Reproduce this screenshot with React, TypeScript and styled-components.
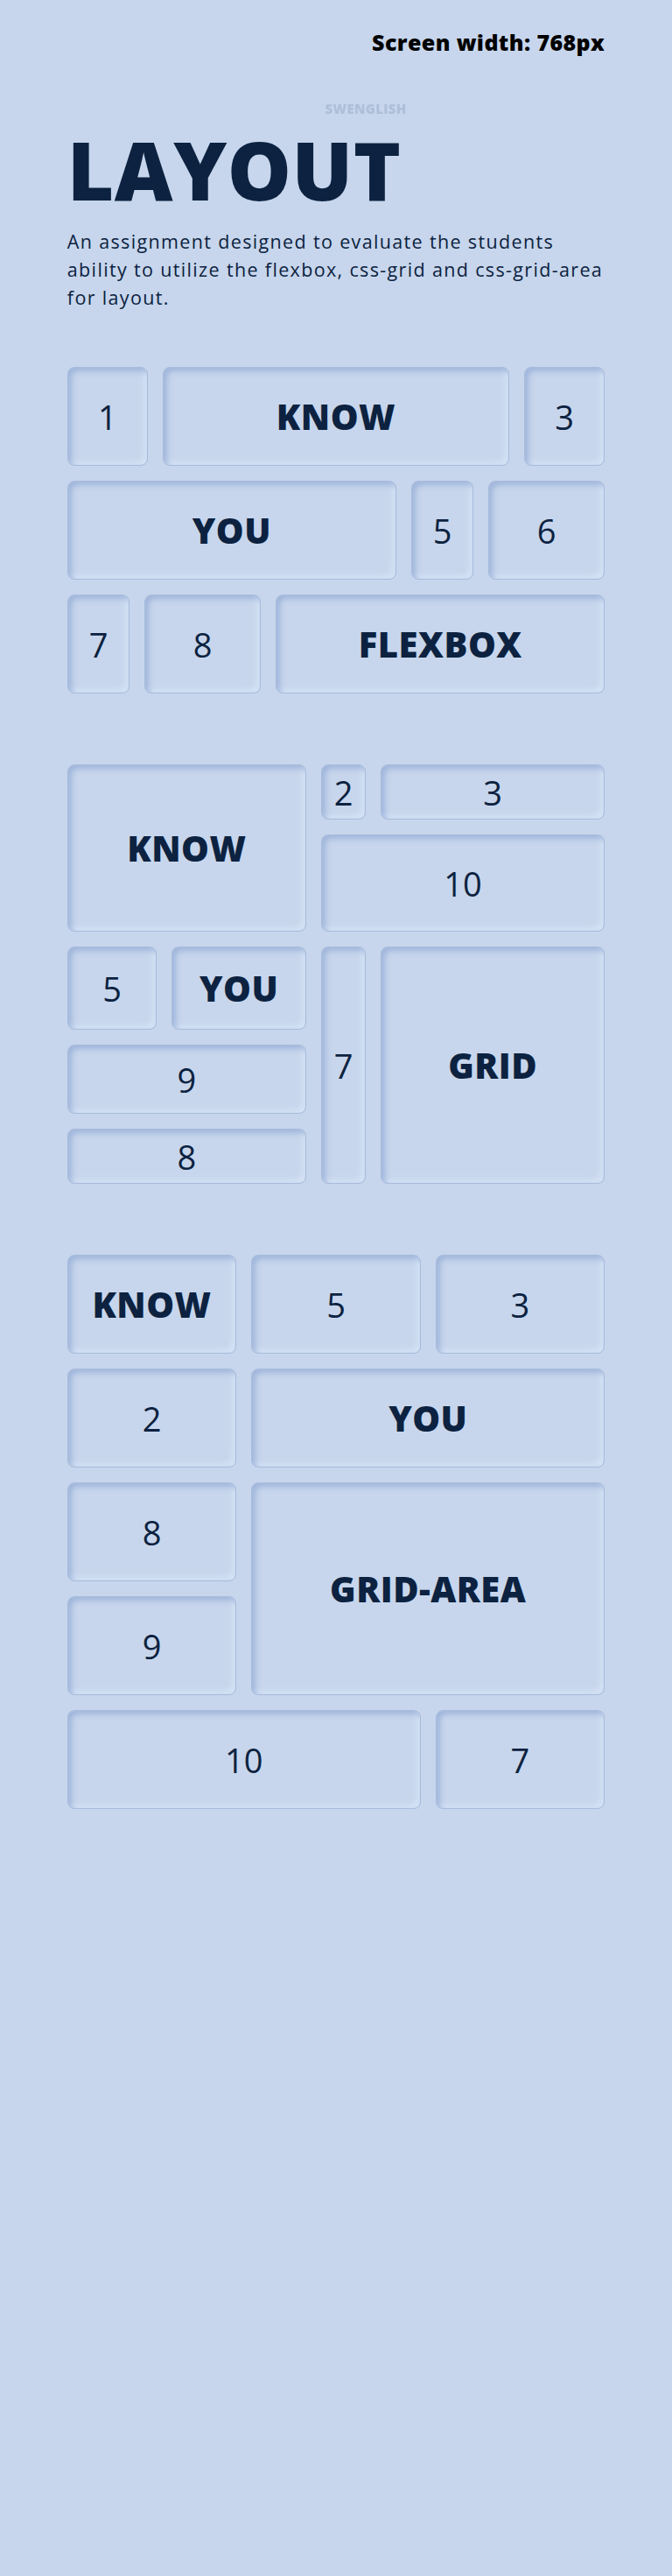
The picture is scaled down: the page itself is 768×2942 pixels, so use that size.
import styled, { createGlobalStyle, css } from 'styled-components'

const INK = '#0c2240'
const BG = '#c7d6ec'

const GlobalStyle = createGlobalStyle`
  html, body {
    margin: 0;
    padding: 0;
    background: ${BG};
  }
  body {
    font-family: 'Open Sans', 'Liberation Sans', sans-serif;
    color: ${INK};
    min-height: 2942px;
  }
  * {
    box-sizing: border-box;
  }
`

const Page = styled.main`
  display: flex;
  flex-direction: column;
  padding: 0 10% 80px;
`

const ScreenWidth = styled.div`
  padding-top: 30px;
  text-align: right;
  font-size: 25px;
  font-weight: 800;
  line-height: 36px;
  color: #000;
  letter-spacing: 0.4px;
`

const Watermark = styled.div`
  margin-top: 48px;
  margin-left: 68px;
  text-align: center;
  font-size: 15px;
  font-weight: 800;
  line-height: 20px;
  letter-spacing: 0.3px;
  color: #aebfd9;
  filter: blur(0.6px);
`

const Title = styled.h1`
  margin: 10px 0 0;
  font-size: 92px;
  font-weight: 800;
  line-height: 100px;
  letter-spacing: 0.5px;
`

const Lead = styled.p`
  margin: 16px 0 0;
  font-size: 21.5px;
  font-weight: 400;
  line-height: 32px;
  letter-spacing: 1.35px;
`

const Section = styled.section`
  margin-top: 81px;
  &:first-of-type {
    margin-top: 63px;
  }
`

const FlexStack = styled.div`
  display: flex;
  flex-direction: column;
  gap: 17px;
`

const FlexRow = styled.div`
  display: flex;
  gap: 17px;
  height: 113px;
`

const Box = styled.div<{ $word?: boolean; $grow?: number; $width?: string; $area?: string }>`
  display: flex;
  align-items: center;
  justify-content: center;
  min-width: 0;
  border: 1px solid #a7bbdb;
  border-radius: 8px;
  background: ${BG};
  box-shadow:
    inset 4px 4px 6px rgba(128, 155, 205, 0.55),
    inset -4px -4px 6px rgba(220, 232, 250, 0.7);
  font-size: 38px;
  line-height: 1;
  font-weight: 400;
  ${({ $word }) =>
    $word &&
    css`
      font-size: 40px;
      font-weight: 800;
      letter-spacing: 0.5px;
    `}
  ${({ $grow, $width }) =>
    $width
      ? css`
          flex: 0 0 ${$width};
        `
      : $grow
      ? css`
          flex: ${$grow} 1 0;
        `
      : ''}
  ${({ $area }) =>
    $area &&
    css`
      grid-area: ${$area};
    `}
`

const GridBoard = styled.div`
  display: grid;
  gap: 17px;
  grid-template-columns: 2fr 3fr 1fr 5fr;
  grid-template-rows: 63px 111px 95px 79px 63px;
  grid-template-areas:
    'know know two three'
    'know know ten ten'
    'five you seven grid'
    'nine nine seven grid'
    'eight eight seven grid';
`

const AreaBoard = styled.div`
  display: grid;
  gap: 17px;
  grid-template-columns: repeat(3, 1fr);
  grid-auto-rows: 113px;
  grid-template-areas:
    'know five three'
    'two you you'
    'eight area area'
    'nine area area'
    'ten ten seven';
`

export default function App() {
  return (
    <>
      <GlobalStyle />
      <Page>
        <ScreenWidth>Screen width: 768px</ScreenWidth>
        <Watermark>SWENGLISH</Watermark>
        <Title>LAYOUT</Title>
        <Lead>
          An assignment designed to evaluate the students ability to utilize the flexbox, css-grid
          and css-grid-area for layout.
        </Lead>

        <Section>
          <FlexStack>
            <FlexRow>
              <Box $width="15%">1</Box>
              <Box $grow={1} $word>
                KNOW
              </Box>
              <Box $width="15%">3</Box>
            </FlexRow>
            <FlexRow>
              <Box $grow={377} $word>
                YOU
              </Box>
              <Box $grow={70}>5</Box>
              <Box $grow={132}>6</Box>
            </FlexRow>
            <FlexRow>
              <Box $grow={70}>7</Box>
              <Box $grow={132}>8</Box>
              <Box $grow={377} $word>
                FLEXBOX
              </Box>
            </FlexRow>
          </FlexStack>
        </Section>

        <Section>
          <GridBoard>
            <Box $area="know" $word>
              KNOW
            </Box>
            <Box $area="two">2</Box>
            <Box $area="three">3</Box>
            <Box $area="ten">10</Box>
            <Box $area="five">5</Box>
            <Box $area="you" $word>
              YOU
            </Box>
            <Box $area="seven">7</Box>
            <Box $area="grid" $word>
              GRID
            </Box>
            <Box $area="nine">9</Box>
            <Box $area="eight">8</Box>
          </GridBoard>
        </Section>

        <Section>
          <AreaBoard>
            <Box $area="know" $word>
              KNOW
            </Box>
            <Box $area="five">5</Box>
            <Box $area="three">3</Box>
            <Box $area="two">2</Box>
            <Box $area="you" $word>
              YOU
            </Box>
            <Box $area="eight">8</Box>
            <Box $area="area" $word>
              GRID-AREA
            </Box>
            <Box $area="nine">9</Box>
            <Box $area="ten">10</Box>
            <Box $area="seven">7</Box>
          </AreaBoard>
        </Section>
      </Page>
    </>
  )
}
